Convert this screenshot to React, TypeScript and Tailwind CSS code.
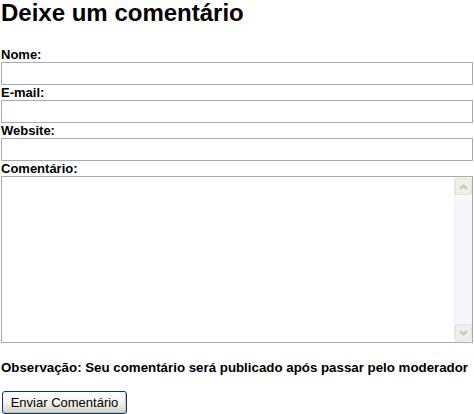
import { useState } from "react";

const fields = [
  { id: "nome", label: "Nome:" },
  { id: "email", label: "E-mail:" },
  { id: "website", label: "Website:" },
];

function ScrollArrow({ dir }: { dir: "up" | "down" }) {
  return (
    <div className="flex h-[17px] w-[17px] items-center justify-center rounded-[2px] border border-[#e4e3da] bg-[#efeee7]">
      <svg width="9" height="6" viewBox="0 0 9 6">
        <path
          d={dir === "up" ? "M1 5 L4.5 1.5 L8 5" : "M1 1 L4.5 4.5 L8 1"}
          fill="none"
          stroke="#c4c4bc"
          strokeWidth="2"
        />
      </svg>
    </div>
  );
}

export default function App() {
  const [values, setValues] = useState<Record<string, string>>({});
  const [comment, setComment] = useState("");

  return (
    <div className="min-h-[414px] bg-white px-[1px] font-['Liberation_Sans',Arial,sans-serif] text-black">
      <h2 className="mb-[21px] text-[24px] font-bold leading-[26px]">Deixe um comentário</h2>

      <form onSubmit={(e) => e.preventDefault()}>
        {fields.map((f) => (
          <div key={f.id}>
            <label htmlFor={f.id} className="block text-[13px] font-bold leading-[15px]">
              {f.label}
            </label>
            <input
              id={f.id}
              type="text"
              value={values[f.id] ?? ""}
              onChange={(e) => setValues({ ...values, [f.id]: e.target.value })}
              className="block h-[23px] w-[472px] border border-[#a5acb2] bg-white px-1 text-[13px] outline-none"
            />
          </div>
        ))}

        <label htmlFor="comentario" className="block text-[13px] font-bold leading-[15px]">
          Comentário:
        </label>
        <div className="flex h-[167px] w-[472px] border border-[#a5acb2] bg-white">
          <textarea
            id="comentario"
            value={comment}
            onChange={(e) => setComment(e.target.value)}
            className="flex-1 resize-none bg-white p-1 text-[13px] outline-none"
          />
          <div className="flex w-[18px] flex-col justify-between border-l border-[#ebebf0] bg-[#f7f7fb] py-[1px]">
            <ScrollArrow dir="up" />
            <ScrollArrow dir="down" />
          </div>
        </div>

        <p className="mt-[17px] text-[13.3px] font-bold leading-[15px]">
          Observação: Seu comentário será publicado após passar pelo moderador
        </p>

        <button
          type="submit"
          className="mt-[16px] ml-[1px] h-[23px] w-[125px] rounded-[3px] border border-[#003c74] bg-gradient-to-b from-[#ffffff] via-[#f3f3ee] to-[#d6d0c5] text-[13px] leading-[15px] shadow-[inset_-1px_-1px_0_#c9c5b8]"
        >
          Enviar Comentário
        </button>
      </form>
    </div>
  );
}
